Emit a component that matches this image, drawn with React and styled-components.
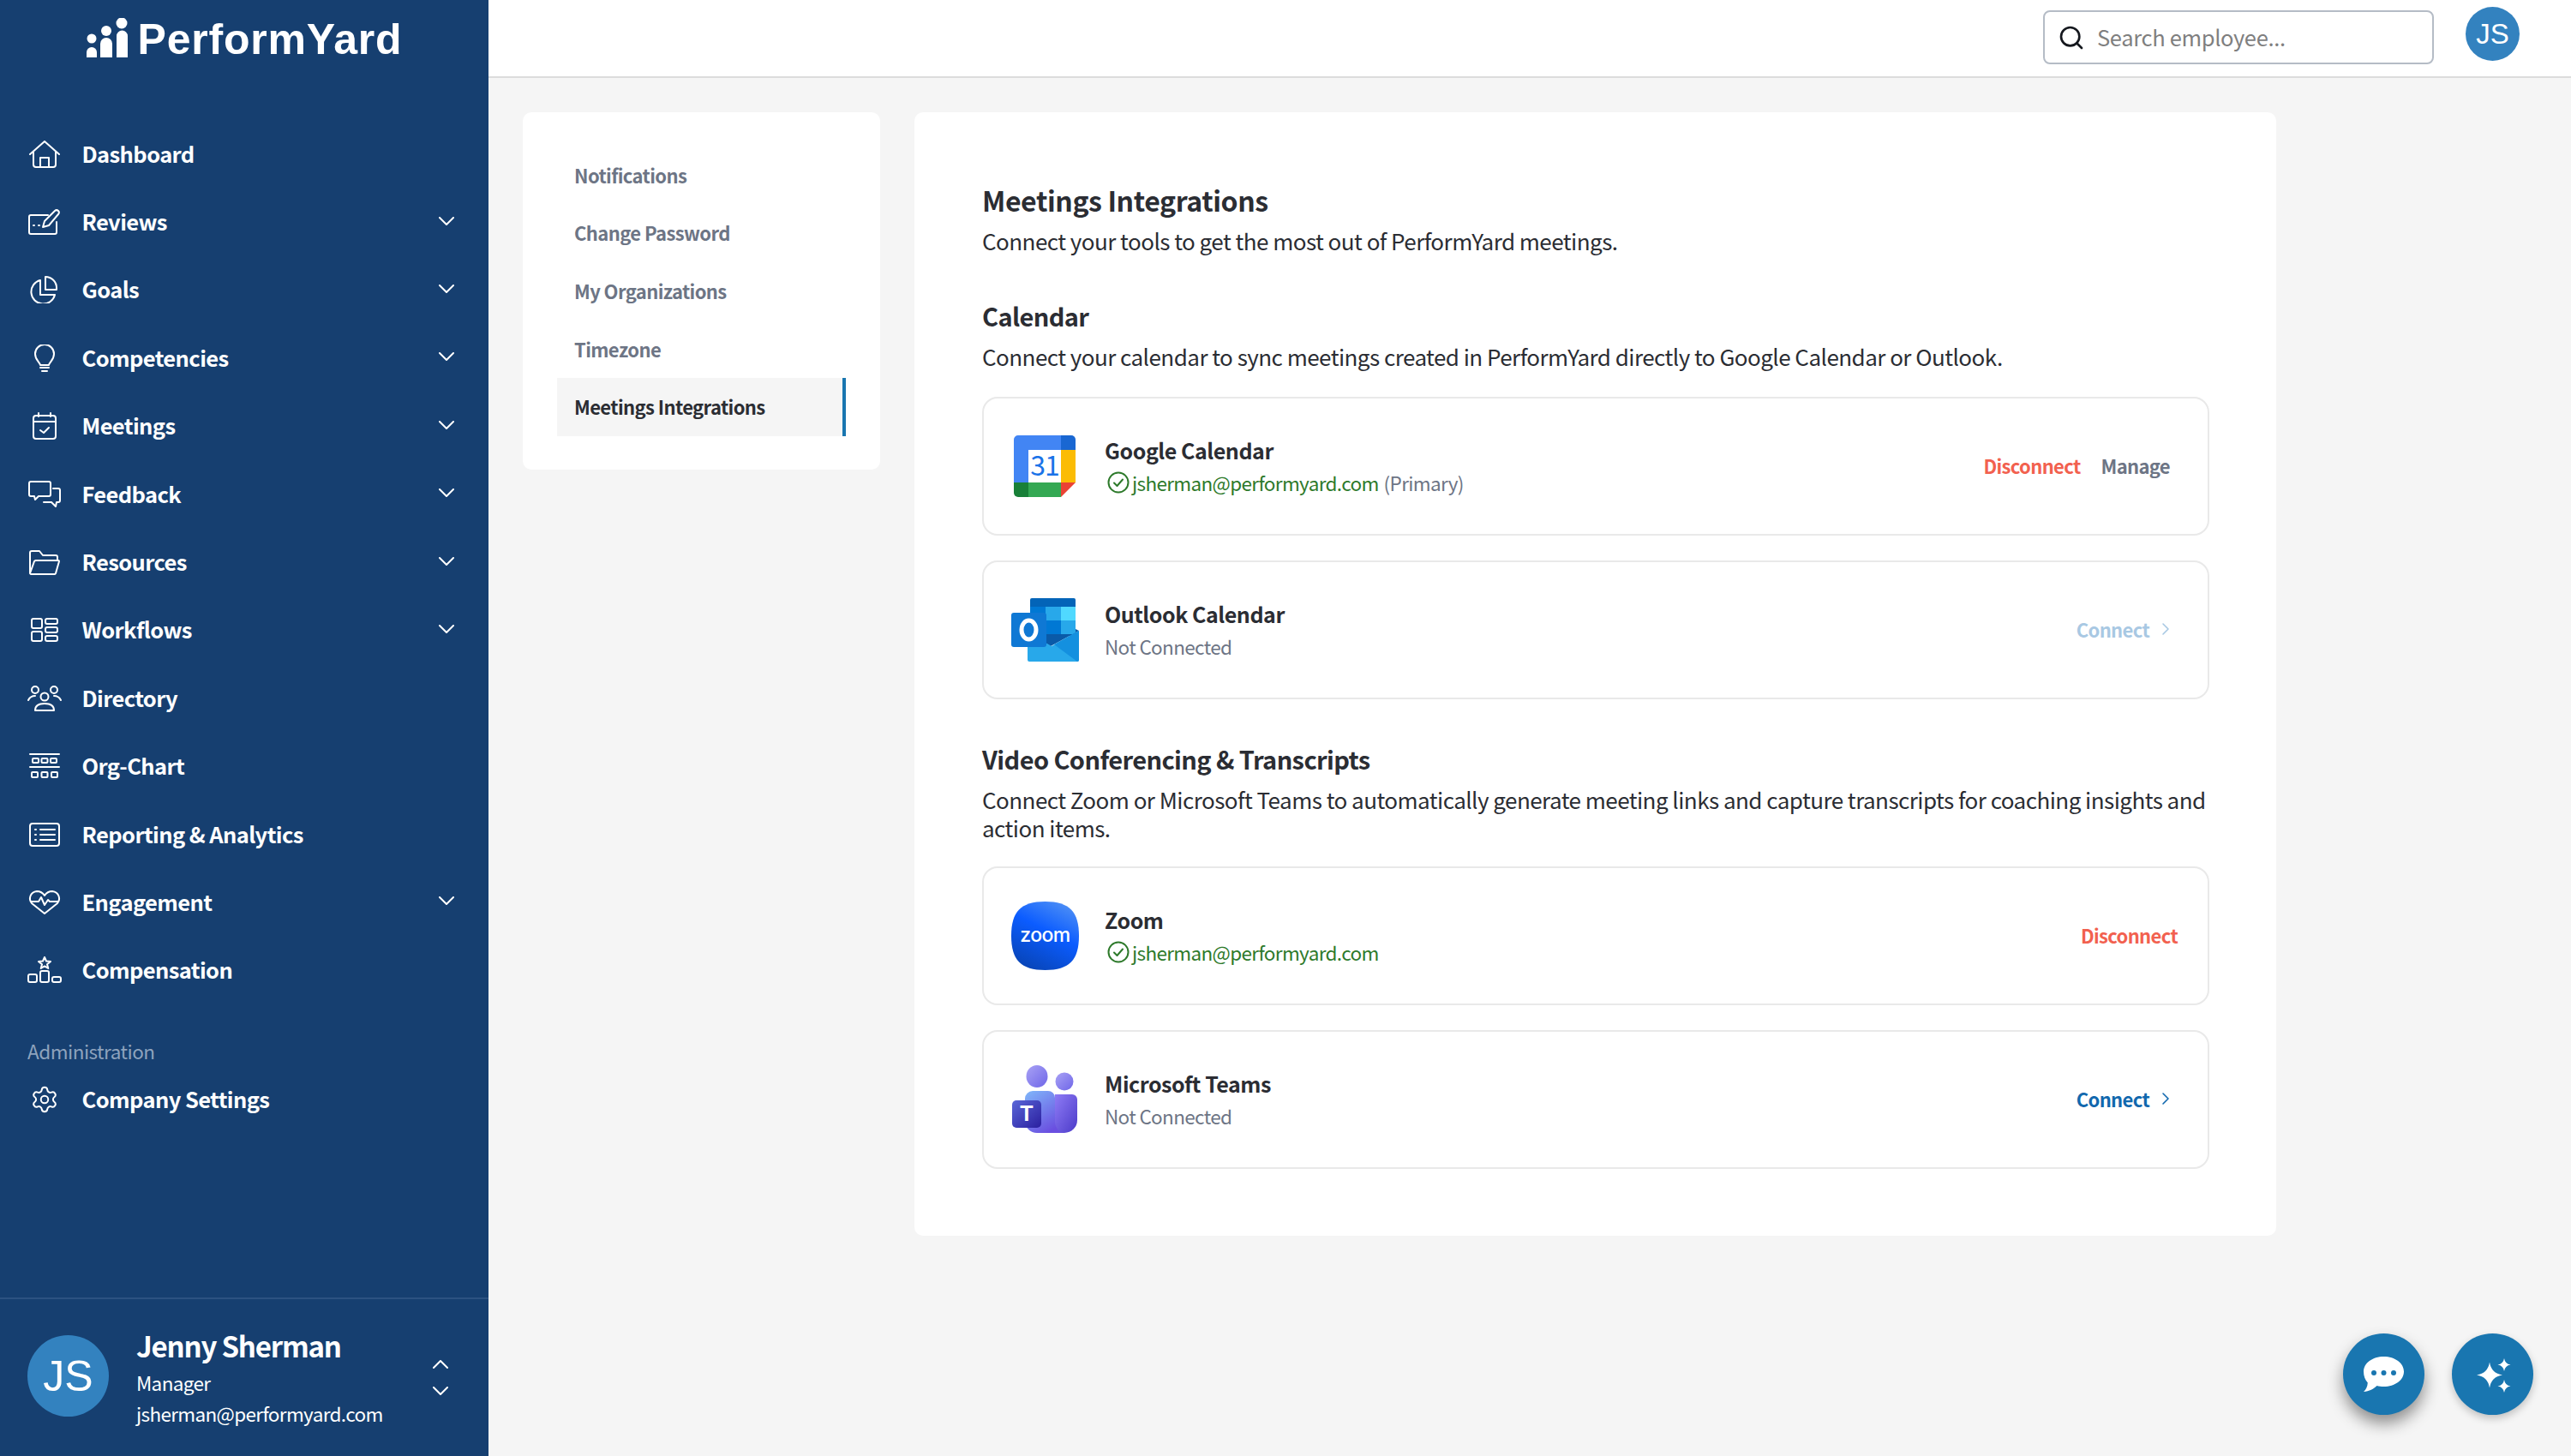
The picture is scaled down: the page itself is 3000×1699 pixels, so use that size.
import React from "react";
import styled, { createGlobalStyle } from "styled-components";
import { Search, Settings } from "lucide-react";

const Global = createGlobalStyle`
  html, body { margin: 0; padding: 0; background: #f5f5f5; }
  * { box-sizing: border-box; }
  body { font-family: "Noto Sans CJK SC", "Noto Sans", sans-serif; }
`;

const Page = styled.div`
  display: flex;
  width: 3000px;
  height: 1699px;
  overflow: hidden;
`;

const Sidebar = styled.aside`
  width: 570px;
  flex: none;
  display: flex;
  flex-direction: column;
  background: #163f70;
  color: #fff;
`;

const LogoRow = styled.div`
  height: 140px;
  flex: none;
  display: flex;
  justify-content: center;
  padding-top: 21px;
  gap: 12px;
`;

const LogoText = styled.span`
  font-family: "Liberation Sans", Arial, sans-serif;
  font-weight: 700;
  font-size: 50px;
  line-height: 50px;
  letter-spacing: 0.8px;
`;

const NavRow = styled.div`
  height: 79.4px;
  display: flex;
  align-items: center;
  padding: 0 40px 0 32px;
  gap: 23.5px;
`;

const NavIcon = styled.svg`
  width: 40px;
  height: 32px;
  flex: none;
  fill: none;
  stroke: #fff;
  stroke-width: 2;
  stroke-linecap: round;
  stroke-linejoin: round;
`;

const GearIcon = styled(Settings)`
  margin: 0 3px;
  flex: none;
`;

const NavLabel = styled.span`
  flex: 1;
  font-size: 25.5px;
  font-weight: 600;
  letter-spacing: -0.6px;
  line-height: 36px;
  padding-bottom: 2px;
`;

const Chevron = styled.svg`
  width: 18px;
  height: 10px;
  flex: none;
  fill: none;
  stroke: #fff;
  stroke-width: 2;
  stroke-linecap: round;
  stroke-linejoin: round;
  margin-bottom: ${({ $lift }) => ($lift ? 3 : 0)}px;
  transform: ${({ $up }) => ($up ? "rotate(180deg)" : "none")};
`;

const SectionLabel = styled.div`
  padding: 37px 0 0 32px;
  height: 71px;
  font-size: 22.5px;
  letter-spacing: -0.5px;
  line-height: 34px;
  color: #8ea3bd;
`;

const UserBlock = styled.div`
  margin-top: auto;
  height: 185px;
  border-top: 2px solid #2c5281;
  display: flex;
  align-items: flex-start;
  padding: 42px 47px 0 32px;
`;

const UserAvatar = styled.div`
  width: ${({ $size }) => $size}px;
  height: ${({ $size }) => $size}px;
  flex: none;
  border-radius: 50%;
  background: #3382bf;
  color: #fff;
  display: flex;
  align-items: center;
  justify-content: center;
  font-family: "Liberation Sans", Arial, sans-serif;
  font-size: ${({ $size }) => Math.round($size * 0.53)}px;
`;

const UserText = styled.div`
  flex: 1;
  margin-left: 32px;
  margin-top: -10px;
`;

const UserName = styled.div`
  font-size: 33px;
  font-weight: 600;
  letter-spacing: -1.2px;
  line-height: 44px;
  margin-bottom: 3px;
`;

const UserLine = styled.div`
  font-size: 22.5px;
  letter-spacing: -0.65px;
  line-height: 36px;
`;

const Stepper = styled.div`
  display: flex;
  flex-direction: column;
  gap: 21px;
  margin-top: 29px;
`;

const Main = styled.div`
  flex: 1;
  display: flex;
  flex-direction: column;
`;

const TopBar = styled.header`
  height: 91px;
  flex: none;
  background: #fff;
  border-bottom: 2px solid #dcdcdc;
  display: flex;
  align-items: flex-start;
  padding: 8px 60px 0 0;
  justify-content: flex-end;
  gap: 37px;
`;

const SearchBox = styled.div`
  width: 456px;
  height: 63px;
  margin-top: 4px;
  border: 2px solid #b5bcc6;
  border-radius: 8px;
  display: flex;
  align-items: center;
  padding-left: 15px;
  gap: 14px;
  color: #15181e;
`;

const Placeholder = styled.span`
  font-size: 25.5px;
  letter-spacing: -0.35px;
  padding-bottom: 2px;
  color: #7f7f7f;
`;

const Body = styled.div`
  display: flex;
  align-items: flex-start;
  gap: 40px;
  padding: 40px 0 0 40px;
`;

const SettingsNav = styled.nav`
  width: 417px;
  height: 417px;
  flex: none;
  background: #fff;
  border-radius: 10px;
  padding: 40px;
`;

const SettingsItem = styled.div`
  height: 67.6px;
  display: flex;
  align-items: center;
  padding: 0 0 2px 20px;
  font-size: 22px;
  font-weight: 600;
  letter-spacing: -0.6px;
  color: ${({ $active }) => ($active ? "#2b2d33" : "#6d7585")};
  background: ${({ $active }) => ($active ? "#f5f5f5" : "transparent")};
  border-right: 4px solid ${({ $active }) => ($active ? "#1976b0" : "transparent")};
`;

const Panel = styled.section`
  width: 1589px;
  height: 1311px;
  flex: none;
  background: #fff;
  border-radius: 10px;
  padding: 82px 78px 0 79px;
`;

const Heading = styled.h2`
  margin: ${({ $top }) => $top || 0}px 0 0;
  font-size: ${({ $large }) => ($large ? 32 : 29)}px;
  font-weight: 600;
  letter-spacing: ${({ $large }) => ($large ? -0.4 : -0.6)}px;
  line-height: 40px;
  color: #2b2d33;
`;

const Lead = styled.p`
  margin: 11px 0 ${({ $bottom }) => $bottom}px;
  font-size: 26px;
  letter-spacing: -0.53px;
  line-height: 33px;
  color: #2b2d33;
`;

const CardList = styled.div`
  display: flex;
  flex-direction: column;
  gap: 29px;
`;

const Card = styled.div`
  height: 162px;
  border: 2px solid #e9e9e9;
  border-radius: 18px;
  display: flex;
  align-items: center;
  padding: 0 35px 0 31px;
`;

const LogoSlot = styled.div`
  width: 80px;
  flex: none;
  margin-right: 30px;
  display: flex;
  justify-content: center;
`;

const CardText = styled.div`
  flex: 1;
  display: flex;
  flex-direction: column;
  gap: 3px;
  padding-bottom: 2px;
`;

const CardTitle = styled.div`
  font-size: 25px;
  font-weight: 600;
  letter-spacing: -0.45px;
  line-height: 36px;
  color: #2b2d33;
`;

const CardStatus = styled.div`
  display: flex;
  align-items: center;
  font-size: 22.5px;
  letter-spacing: -0.65px;
  line-height: 34px;
  color: #6d7585;
`;

const Account = styled.span`
  color: #2e7a2b;
`;

const Primary = styled.span`
  margin-left: 6px;
`;

const CheckIcon = styled.svg`
  width: 26px;
  height: 26px;
  margin: 0 3px;
  fill: none;
  stroke: #2e7a2b;
  stroke-width: 2;
  stroke-linecap: round;
  stroke-linejoin: round;
`;

const Actions = styled.div`
  display: flex;
  align-items: center;
  gap: 24px;
`;

const Action = styled.button`
  border: 0;
  background: none;
  font: inherit;
  font-size: 22px;
  font-weight: 600;
  letter-spacing: -0.65px;
  padding: 0 ${({ $inset }) => ($inset ? 9 : 0)}px 2px 0;
  display: flex;
  align-items: center;
  gap: 14px;
  color: ${({ $tone }) =>
    ({ danger: "#f2614f", muted: "#6d7585", link: "#1168ae", off: "#a8c8e3" })[$tone]};
`;

const ActionArrow = styled.svg`
  width: 10px;
  height: 16px;
  fill: none;
  stroke: currentColor;
  stroke-width: 1.6;
  stroke-linecap: round;
  stroke-linejoin: round;
`;

const FabGroup = styled.div`
  position: fixed;
  left: 2734px;
  top: 1556px;
  display: flex;
  gap: 32px;
`;

const Fab = styled.div`
  width: 95px;
  height: 95px;
  border-radius: 50%;
  background: #1976b0;
  display: flex;
  align-items: center;
  justify-content: center;
  box-shadow: ${({ $strong }) =>
    $strong ? "0 10px 18px rgba(0,0,0,.42)" : "0 4px 10px rgba(0,0,0,.22)"};
`;

const Down = ({ up, lift }) => (
  <Chevron viewBox="0 0 18 10" $up={up} $lift={lift}>
    <path d="M1 1l8 8 8-8" />
  </Chevron>
);

const LogoMark = () => (
  <svg width="48" height="46" viewBox="0 0 48 46" fill="#fff">
    <circle cx="6" cy="24" r="5.5" />
    <path d="M0 46v-6a6 6 0 0 1 12 0v6z" />
    <circle cx="23" cy="15" r="6" />
    <path d="M16 46V30a7 7 0 0 1 14 0v16z" />
    <circle cx="41" cy="6" r="6.5" />
    <path d="M35 46V21a6.5 6.5 0 0 1 13 0v25z" />
  </svg>
);

const icons = {
  home: (
    <>
      <path d="M3 16L20 1l17 15" />
      <path d="M7 13v15a3 3 0 0 0 3 3h20a3 3 0 0 0 3-3V13" />
      <path d="M15 31V20h10v11" />
    </>
  ),
  reviews: (
    <>
      <path d="M24 8H4a2 2 0 0 0-2 2v18a2 2 0 0 0 2 2h28a2 2 0 0 0 2-2V16" />
      <path d="M7 20h1M13 20h1" />
      <path d="M18 22l2-7L32 3a3 3 0 0 1 4 0 3 3 0 0 1 0 4L25 20z" />
    </>
  ),
  goals: (
    <>
      <path d="M15 5a14 14 0 1 0 17 17H15z" />
      <path d="M21 1a13 13 0 0 1 13 13v2H21z" />
    </>
  ),
  bulb: (
    <>
      <path d="M15 24c-1-4-6-6-6-13a11 11 0 0 1 22 0c0 7-5 9-6 13z" />
      <path d="M15 27h10M17 31h6" />
    </>
  ),
  calendar: (
    <>
      <rect x="7" y="4" width="26" height="27" rx="3" />
      <path d="M7 11h26M13 1v4M27 1v4" />
      <path d="M15 21l4 3 6-6" />
    </>
  ),
  feedback: (
    <>
      <path d="M4 1h21a2 2 0 0 1 2 2v13a2 2 0 0 1-2 2H13l-4 4-1-4H4a2 2 0 0 1-2-2V3a2 2 0 0 1 2-2z" />
      <path d="M30 9h6a2 2 0 0 1 2 2v12a2 2 0 0 1-2 2h-2l-1 5-5-5h-9" />
    </>
  ),
  folder: (
    <>
      <path d="M3 28V5a2 2 0 0 1 2-2h9l4 5h15a2 2 0 0 1 2 2v3" />
      <path d="M3 29l5-14a2 2 0 0 1 2-1h26a1 1 0 0 1 1 1l-4 14a2 2 0 0 1-2 1H5a2 2 0 0 1-2-1z" />
    </>
  ),
  workflows: (
    <>
      <rect x="5" y="3" width="12" height="11" rx="2" />
      <rect x="5" y="18" width="12" height="11" rx="2" />
      <rect x="21" y="3" width="14" height="6" rx="2" />
      <rect x="21" y="13" width="14" height="6" rx="2" />
      <rect x="21" y="23" width="14" height="6" rx="2" />
    </>
  ),
  directory: (
    <>
      <circle cx="9" cy="6" r="4" />
      <circle cx="31" cy="6" r="4" />
      <circle cx="20" cy="14" r="4.5" />
      <path d="M1 18c2-4 5-5 8-5M39 18c-2-4-5-5-8-5" />
      <path d="M9 30c0-5 4-8 11-8s11 3 11 8z" />
    </>
  ),
  org: (
    <>
      <path d="M3 2h34M3 17h34" />
      <rect x="6" y="7" width="7" height="5" rx="1" />
      <rect x="16.5" y="7" width="7" height="5" rx="1" />
      <rect x="27" y="7" width="7" height="5" rx="1" />
      <rect x="5" y="23" width="7" height="6" rx="1" />
      <rect x="16.5" y="23" width="7" height="6" rx="1" />
      <rect x="28" y="23" width="7" height="6" rx="1" />
    </>
  ),
  report: (
    <>
      <rect x="3" y="3" width="34" height="26" rx="3" />
      <path d="M9 10h1M9 16h1M9 22h1M15 10h17M15 16h17M15 22h17" />
    </>
  ),
  heart: (
    <>
      <path d="M5 17C1 12 3 4 11 3c4 0 7 2 9 5 2-3 5-5 9-5 8 1 10 9 6 14L20 29z" />
      <path d="M4 15h9l3-5 4 9 4-6 2 2h10" />
    </>
  ),
  podium: (
    <>
      <path d="M20 1l2 4.5 5 .5-4 3.2 1.3 4.8-4.3-2.6-4.3 2.6 1.3-4.8-4-3.2 5-.5z" />
      <rect x="1" y="21" width="10" height="9" rx="2" />
      <rect x="15" y="17" width="10" height="13" rx="2" />
      <rect x="29" y="24" width="10" height="6" rx="2" />
    </>
  ),
};

const menu = [
  ["home", "Dashboard"],
  ["reviews", "Reviews", true],
  ["goals", "Goals", true],
  ["bulb", "Competencies", true],
  ["calendar", "Meetings", true],
  ["feedback", "Feedback", true],
  ["folder", "Resources", true],
  ["workflows", "Workflows", true],
  ["directory", "Directory"],
  ["org", "Org-Chart"],
  ["report", "Reporting & Analytics"],
  ["heart", "Engagement", true],
  ["podium", "Compensation"],
];

const GoogleLogo = () => (
  <svg width="72" height="72" viewBox="0 0 72 72">
    <path d="M5 0h50v17H17v38H0V5a5 5 0 0 1 5-5z" fill="#4285f4" />
    <path d="M55 0h12a5 5 0 0 1 5 5v12H55z" fill="#1967d2" />
    <rect x="55" y="17" width="17" height="38" fill="#fbbc04" />
    <path d="M72 55L55 72V55z" fill="#ea4335" />
    <rect x="17" y="55" width="38" height="17" fill="#34a853" />
    <path d="M0 55h17v17H5a5 5 0 0 1-5-5z" fill="#188038" />
    <rect x="17" y="17" width="38" height="38" fill="#fff" />
    <text x="36" y="47" textAnchor="middle" fontFamily="Noto Sans CJK SC, sans-serif" fontSize="32" letterSpacing="-1" fill="#1a73e8">31</text>
  </svg>
);

const OutlookLogo = () => (
  <svg width="79" height="74" viewBox="0 0 79 74">
    <rect x="22" y="0" width="53" height="44" rx="2" fill="#0364b8" />
    <rect x="22" y="10" width="18" height="16" fill="#0078d4" />
    <rect x="40" y="10" width="18" height="16" fill="#28a8ea" />
    <rect x="58" y="10" width="17" height="16" fill="#50d9ff" />
    <rect x="22" y="26" width="18" height="16" fill="#0364b8" />
    <rect x="40" y="26" width="18" height="16" fill="#0078d4" />
    <rect x="58" y="26" width="17" height="16" fill="#28a8ea" />
    <path d="M41 42h34v-6l4 2-33 18-5-3z" fill="#0a5aa8" />
    <path d="M19 40l28 16 32-18v34a2 2 0 0 1-2 2H21a2 2 0 0 1-2-2z" fill="#28a8ea" />
    <path d="M79 38v34a2 2 0 0 1-2 2L50 54z" fill="#1490df" />
    <rect x="0" y="17" width="41" height="40" rx="3" fill="#0f78d4" />
    <ellipse cx="20.5" cy="37" rx="8.5" ry="11" fill="none" stroke="#fff" strokeWidth="5" />
  </svg>
);

const ZoomLogo = () => (
  <svg width="79" height="80" viewBox="0 0 79 80">
    <defs>
      <linearGradient id="zoomFill" x1="0.8" y1="0" x2="0.3" y2="1">
        <stop offset="0" stopColor="#4f90f5" />
        <stop offset="0.45" stopColor="#0b5cff" />
        <stop offset="1" stopColor="#0845b8" />
      </linearGradient>
    </defs>
    <path d="M39.5 0C68 0 79 12 79 40S68 80 39.5 80 0 68 0 40 11 0 39.5 0z" fill="url(#zoomFill)" />
    <text x="39.5" y="47" textAnchor="middle" fontFamily="Inter, sans-serif" fontSize="23" fontWeight="500" letterSpacing="-0.6" fill="#fff">zoom</text>
  </svg>
);

const TeamsLogo = () => (
  <svg width="76" height="80" viewBox="0 0 76 80">
    <defs>
      <linearGradient id="teamsHead" x1="0" y1="0" x2="1" y2="1">
        <stop offset="0" stopColor="#a9a2f5" />
        <stop offset="1" stopColor="#6f66e8" />
      </linearGradient>
      <linearGradient id="teamsBack" x1="0" y1="0" x2="1" y2="1">
        <stop offset="0" stopColor="#8e7bf5" />
        <stop offset="1" stopColor="#4c3bc9" />
      </linearGradient>
      <linearGradient id="teamsFront" x1="0" y1="0" x2="0.6" y2="1">
        <stop offset="0" stopColor="#80b7fa" />
        <stop offset="1" stopColor="#6a4fe0" />
      </linearGradient>
      <linearGradient id="teamsTile" x1="0" y1="0" x2="1" y2="1">
        <stop offset="0" stopColor="#5a67d8" />
        <stop offset="1" stopColor="#2b1f9f" />
      </linearGradient>
    </defs>
    <ellipse cx="29" cy="13" rx="12.5" ry="13" fill="url(#teamsHead)" />
    <circle cx="61" cy="19" r="10.5" fill="url(#teamsHead)" />
    <path d="M50 34h20a6 6 0 0 1 6 6v24a15 15 0 0 1-15 15h-11z" fill="url(#teamsBack)" />
    <path d="M24 30h18a8 8 0 0 1 8 8v28c0 5 4 13 10 13H29a14 14 0 0 1-14-14V39a9 9 0 0 1 9-9z" fill="url(#teamsFront)" />
    <rect x="0" y="41" width="34" height="32" rx="5" fill="url(#teamsTile)" />
    <text x="17" y="65" textAnchor="middle" fontFamily="Liberation Sans, sans-serif" fontSize="25" fontWeight="700" fill="#fff">T</text>
  </svg>
);

const Verified = () => (
  <CheckIcon viewBox="0 0 26 26">
    <circle cx="13" cy="13" r="11.5" />
    <path d="M8 13.5l3.5 3.5L18 9.5" />
  </CheckIcon>
);

const Connect = ({ disabled }) => (
  <Action $tone={disabled ? "off" : "link"} $inset>
    Connect
    <ActionArrow viewBox="0 0 10 16">
      <path d="M2 2l6 6-6 6" />
    </ActionArrow>
  </Action>
);

const Integration = ({ logo, name, account, primary, children }) => (
  <Card>
    <LogoSlot>{logo}</LogoSlot>
    <CardText>
      <CardTitle>{name}</CardTitle>
      <CardStatus>
        {account ? (
          <>
            <Verified />
            <Account>{account}</Account>
            {primary && <Primary>(Primary)</Primary>}
          </>
        ) : (
          "Not Connected"
        )}
      </CardStatus>
    </CardText>
    <Actions>{children}</Actions>
  </Card>
);

const App = () => (
  <Page>
    <Global />
    <Sidebar>
      <LogoRow>
        <LogoMark />
        <LogoText>PerformYard</LogoText>
      </LogoRow>
      {menu.map(([icon, label, more]) => (
        <NavRow key={label}>
          <NavIcon viewBox="0 0 40 32">{icons[icon]}</NavIcon>
          <NavLabel>{label}</NavLabel>
          {more && <Down lift />}
        </NavRow>
      ))}
      <SectionLabel>Administration</SectionLabel>
      <NavRow>
        <GearIcon size={34} strokeWidth={1.4} />
        <NavLabel>Company Settings</NavLabel>
      </NavRow>
      <UserBlock>
        <UserAvatar $size={95}>JS</UserAvatar>
        <UserText>
          <UserName>Jenny Sherman</UserName>
          <UserLine>Manager</UserLine>
          <UserLine>jsherman@performyard.com</UserLine>
        </UserText>
        <Stepper>
          <Down up />
          <Down />
        </Stepper>
      </UserBlock>
    </Sidebar>
    <Main>
      <TopBar>
        <SearchBox>
          <Search size={32} strokeWidth={2} />
          <Placeholder>Search employee...</Placeholder>
        </SearchBox>
        <UserAvatar $size={63}>JS</UserAvatar>
      </TopBar>
      <Body>
        <SettingsNav>
          <SettingsItem>Notifications</SettingsItem>
          <SettingsItem>Change Password</SettingsItem>
          <SettingsItem>My Organizations</SettingsItem>
          <SettingsItem>Timezone</SettingsItem>
          <SettingsItem $active>Meetings Integrations</SettingsItem>
        </SettingsNav>
        <Panel>
          <Heading $large>Meetings Integrations</Heading>
          <Lead $bottom={51}>Connect your tools to get the most out of PerformYard meetings.</Lead>
          <Heading>Calendar</Heading>
          <Lead $bottom={31}>
            Connect your calendar to sync meetings created in PerformYard directly to Google Calendar or Outlook.
          </Lead>
          <CardList>
            <Integration logo={<GoogleLogo />} name="Google Calendar" account="jsherman@performyard.com" primary>
              <Action $tone="danger">Disconnect</Action>
              <Action $tone="muted" $inset>Manage</Action>
            </Integration>
            <Integration logo={<OutlookLogo />} name="Outlook Calendar">
              <Connect disabled />
            </Integration>
          </CardList>
          <Heading $top={49}>Video Conferencing &amp; Transcripts</Heading>
          <Lead $bottom={29}>
            Connect Zoom or Microsoft Teams to automatically generate meeting links and capture transcripts for coaching insights and action items.
          </Lead>
          <CardList>
            <Integration logo={<ZoomLogo />} name="Zoom" account="jsherman@performyard.com">
              <Action $tone="danger">Disconnect</Action>
            </Integration>
            <Integration logo={<TeamsLogo />} name="Microsoft Teams">
              <Connect />
            </Integration>
          </CardList>
        </Panel>
      </Body>
    </Main>
    <FabGroup>
      <Fab $strong>
        <svg width="47" height="41" viewBox="0 0 47 41" fill="#fff">
          <path d="M23.500 0C36.500 0 47 7.500 47 17.500S36.500 35 23.500 35c-3 0-5.500-.4-8-1.100C12 37.500 6.500 40.500 0 41c2.800-2.500 4.500-6 4.800-10.500C1.800 27.300 0 22.600 0 17.500 0 7.500 10.500 0 23.500 0z" />
          <circle cx="12" cy="19" r="3" fill="#1976b0" />
          <circle cx="23.500" cy="19" r="3" fill="#1976b0" />
          <circle cx="35" cy="19" r="3" fill="#1976b0" />
        </svg>
      </Fab>
      <Fab>
        <svg width="42" height="42" viewBox="0 0 42 42" fill="#fff">
          <path d="M17 6.500Q19 19.500 32 21.500 19 23.500 17 36.500 15 23.500 2 21.500 15 19.500 17 6.500z" />
          <path d="M34 2Q35 8.500 41.500 9.500 35 10.500 34 17 33 10.500 26.500 9.500 33 8.500 34 2z" />
          <path d="M34 27Q35 33.500 41.500 34.500 35 35.500 34 42 33 35.500 26.500 34.500 33 33.500 34 27z" />
        </svg>
      </Fab>
    </FabGroup>
  </Page>
);

export default App;
